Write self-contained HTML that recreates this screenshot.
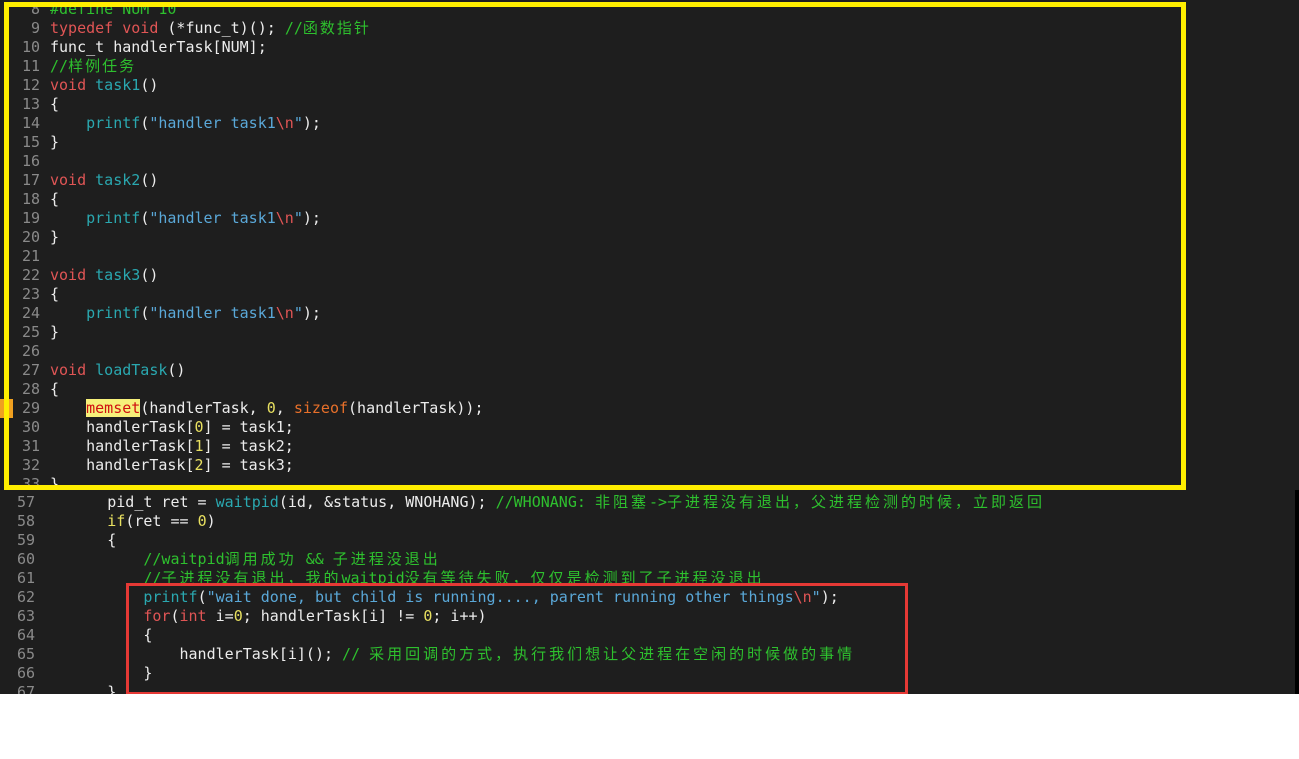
<!DOCTYPE html>
<html><head><meta charset="utf-8"><style>
body{margin:0;width:1299px;height:759px;background:#fff;position:relative;overflow:hidden;font-family:"DejaVu Sans Mono","Noto Sans CJK SC",monospace;font-size:15px;}
.p{position:absolute;background:#1e1e1e;overflow:hidden}
.l{position:absolute;height:19px;line-height:19px;white-space:pre;color:#ececec}
.n{position:absolute;height:19px;line-height:19px;text-align:right;color:#8a8a8a;white-space:pre}
.k{color:#e05555}.f{color:#2aa8b0}.s{color:#5aa8d8}.c{color:#2ec02e}.y{color:#e8e060}.o{color:#e8702a}.e{color:#e05555}
.hl{background:#f6f07a;color:#d01010}
.z{letter-spacing:2px}.w{letter-spacing:3px}
</style></head><body>
<div class="p" style="left:0;top:0;width:1299px;height:490px">
<div class="n" style="left:0;width:40px;top:0px">8</div><div class="l" style="left:50px;top:0px"><span class="c">#define NUM 10</span></div>
<div class="n" style="left:0;width:40px;top:19px">9</div><div class="l" style="left:50px;top:19px"><span class="k">typedef void</span> (*func_t)(); <span class="c">//<span class="z">函数指针</span></span></div>
<div class="n" style="left:0;width:40px;top:38px">10</div><div class="l" style="left:50px;top:38px">func_t handlerTask[NUM];</div>
<div class="n" style="left:0;width:40px;top:57px">11</div><div class="l" style="left:50px;top:57px"><span class="c">//<span class="z">样例任务</span></span></div>
<div class="n" style="left:0;width:40px;top:76px">12</div><div class="l" style="left:50px;top:76px"><span class="k">void</span> <span class="f">task1</span>()</div>
<div class="n" style="left:0;width:40px;top:95px">13</div><div class="l" style="left:50px;top:95px">{</div>
<div class="n" style="left:0;width:40px;top:114px">14</div><div class="l" style="left:50px;top:114px">    <span class="f">printf</span>(<span class="s">"handler task1</span><span class="e">\n</span><span class="s">"</span>);</div>
<div class="n" style="left:0;width:40px;top:133px">15</div><div class="l" style="left:50px;top:133px">}</div>
<div class="n" style="left:0;width:40px;top:152px">16</div>
<div class="n" style="left:0;width:40px;top:171px">17</div><div class="l" style="left:50px;top:171px"><span class="k">void</span> <span class="f">task2</span>()</div>
<div class="n" style="left:0;width:40px;top:190px">18</div><div class="l" style="left:50px;top:190px">{</div>
<div class="n" style="left:0;width:40px;top:209px">19</div><div class="l" style="left:50px;top:209px">    <span class="f">printf</span>(<span class="s">"handler task1</span><span class="e">\n</span><span class="s">"</span>);</div>
<div class="n" style="left:0;width:40px;top:228px">20</div><div class="l" style="left:50px;top:228px">}</div>
<div class="n" style="left:0;width:40px;top:247px">21</div>
<div class="n" style="left:0;width:40px;top:266px">22</div><div class="l" style="left:50px;top:266px"><span class="k">void</span> <span class="f">task3</span>()</div>
<div class="n" style="left:0;width:40px;top:285px">23</div><div class="l" style="left:50px;top:285px">{</div>
<div class="n" style="left:0;width:40px;top:304px">24</div><div class="l" style="left:50px;top:304px">    <span class="f">printf</span>(<span class="s">"handler task1</span><span class="e">\n</span><span class="s">"</span>);</div>
<div class="n" style="left:0;width:40px;top:323px">25</div><div class="l" style="left:50px;top:323px">}</div>
<div class="n" style="left:0;width:40px;top:342px">26</div>
<div class="n" style="left:0;width:40px;top:361px">27</div><div class="l" style="left:50px;top:361px"><span class="k">void</span> <span class="f">loadTask</span>()</div>
<div class="n" style="left:0;width:40px;top:380px">28</div><div class="l" style="left:50px;top:380px">{</div>
<div style="position:absolute;left:0;top:399px;width:13px;height:19px;background:#f0a020"></div>
<div class="n" style="left:0;width:40px;top:399px">29</div><div class="l" style="left:50px;top:399px">    <span class="hl">memset</span>(handlerTask, <span class="y">0</span>, <span class="o">sizeof</span>(handlerTask));</div>
<div class="n" style="left:0;width:40px;top:418px">30</div><div class="l" style="left:50px;top:418px">    handlerTask[<span class="y">0</span>] = task1;</div>
<div class="n" style="left:0;width:40px;top:437px">31</div><div class="l" style="left:50px;top:437px">    handlerTask[<span class="y">1</span>] = task2;</div>
<div class="n" style="left:0;width:40px;top:456px">32</div><div class="l" style="left:50px;top:456px">    handlerTask[<span class="y">2</span>] = task3;</div>
<div class="n" style="left:0;width:40px;top:475px">33</div><div class="l" style="left:50px;top:475px">}</div>
<div style="position:absolute;left:4px;top:2px;width:1172px;height:478px;border:5px solid #ffee00"></div>
</div>
<div class="p" style="left:0;top:490px;width:1295px;height:204px">
<div class="n" style="left:0;width:35px;top:3px">57</div><div class="l" style="left:35px;top:3px">        pid_t ret = <span class="f">waitpid</span>(id, &amp;status, WNOHANG); <span class="c">//WHONANG: <span class="w">非阻塞</span>-&gt;<span class="w">子进程没有退出，父进程检测的时候，立即返回</span></span></div>
<div class="n" style="left:0;width:35px;top:22px">58</div><div class="l" style="left:35px;top:22px">        <span class="y">if</span>(ret == <span class="y">0</span>)</div>
<div class="n" style="left:0;width:35px;top:41px">59</div><div class="l" style="left:35px;top:41px">        {</div>
<div class="n" style="left:0;width:35px;top:60px">60</div><div class="l" style="left:35px;top:60px">            <span class="c">//waitpid<span class="w">调用成功</span> &amp;&amp; <span class="w">子进程没退出</span></span></div>
<div class="n" style="left:0;width:35px;top:79px">61</div><div class="l" style="left:35px;top:79px">            <span class="c">//<span class="w">子进程没有退出，我的</span>waitpid<span class="w">没有等待失败，仅仅是检测到了子进程没退出</span></span></div>
<div class="n" style="left:0;width:35px;top:98px">62</div><div class="l" style="left:35px;top:98px">            <span class="f">printf</span>(<span class="s">"wait done, but child is running...., parent running other things</span><span class="e">\n</span><span class="s">"</span>);</div>
<div class="n" style="left:0;width:35px;top:117px">63</div><div class="l" style="left:35px;top:117px">            <span class="k">for</span>(<span class="k">int</span> i=<span class="y">0</span>; handlerTask[i] != <span class="y">0</span>; i++)</div>
<div class="n" style="left:0;width:35px;top:136px">64</div><div class="l" style="left:35px;top:136px">            {</div>
<div class="n" style="left:0;width:35px;top:155px">65</div><div class="l" style="left:35px;top:155px">                handlerTask[i](); <span class="c">// <span class="w">采用回调的方式，执行我们想让父进程在空闲的时候做的事情</span></span></div>
<div class="n" style="left:0;width:35px;top:174px">66</div><div class="l" style="left:35px;top:174px">            }</div>
<div class="n" style="left:0;width:35px;top:193px">67</div><div class="l" style="left:35px;top:193px">        }</div>
<div style="position:absolute;left:126px;top:93px;width:776px;height:106px;border:3px solid #e53935"></div>
</div>
<div style="position:absolute;left:1295px;top:490px;width:4px;height:204px;background:#000"></div>
</body></html>
